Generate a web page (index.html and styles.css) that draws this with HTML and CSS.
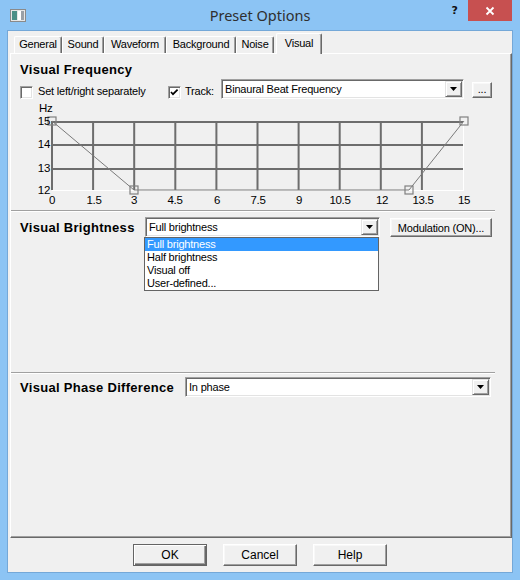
FILE: index.html
```html
<!DOCTYPE html>
<html>
<head>
<meta charset="utf-8">
<title>Preset Options</title>
<link rel="stylesheet" href="styles.css">
</head>
<body>
<div class="window">
  <div class="titlebar">
    <div class="tb-left">
      <svg class="app-icon" width="16" height="13" viewBox="0 0 16 13">
        <rect x="0.5" y="0.5" width="15" height="12" fill="#e6e6e6" stroke="#8a8a8a"/>
        <rect x="2" y="2" width="5" height="9" fill="#4c8f87"/>
        <rect x="8" y="2" width="6" height="9" fill="#ffffff"/>
        <rect x="11" y="2" width="3" height="9" fill="#9aa0a6"/>
      </svg>
    </div>
    <div class="title">Preset Options</div>
    <div class="tb-right">
      <div class="help">?</div>
      <div class="close">
        <svg width="10" height="10" viewBox="0 0 10 10"><path d="M1.5 1.5 L8.5 8.5 M8.5 1.5 L1.5 8.5" stroke="#fff" stroke-width="1.8"/></svg>
      </div>
    </div>
  </div>

  <div class="client">
    <div class="tabs">
      <div class="tab t-general">General</div>
      <div class="tab t-sound">Sound</div>
      <div class="tab t-wave">Waveform</div>
      <div class="tab t-bg">Background</div>
      <div class="tab t-noise">Noise</div>
      <div class="tab active t-visual">Visual</div>
    </div>

    <div class="panel">
      <h2 class="heading">Visual Frequency</h2>
      <div class="row row-track">
        <div class="chk"></div>
        <div class="chk-label wide">Set left/right separately</div>
        <div class="chk checked">
          <svg width="11" height="11" viewBox="0 0 11 11"><path d="M2 5 L4 7.2 L8.6 2.6" fill="none" stroke="#000" stroke-width="1.7"/></svg>
        </div>
        <div class="chk-label track">Track:</div>
        <div class="combo combo-track">
          <div class="combo-text">Binaural Beat Frequency</div>
          <div class="arrow-btn"><svg width="7" height="4" viewBox="0 0 7 4"><path d="M0 0 H7 L3.5 4 Z" fill="#000"/></svg></div>
        </div>
        <div class="btn small">...</div>
      </div>

      <svg class="chart" width="480" height="108" viewBox="20 99 480 108">
        <g stroke="#6d6d6d" stroke-width="2">
          <line x1="52" y1="122" x2="463" y2="122"/>
          <line x1="52" y1="145" x2="463" y2="145"/>
          <line x1="52" y1="169" x2="463" y2="169"/>
          <line x1="52" y1="121" x2="52" y2="190"/>
          <line x1="93.1" y1="121" x2="93.1" y2="190"/>
          <line x1="134.2" y1="121" x2="134.2" y2="190"/>
          <line x1="175.3" y1="121" x2="175.3" y2="190"/>
          <line x1="216.4" y1="121" x2="216.4" y2="190"/>
          <line x1="257.5" y1="121" x2="257.5" y2="190"/>
          <line x1="298.6" y1="121" x2="298.6" y2="190"/>
          <line x1="339.7" y1="121" x2="339.7" y2="190"/>
          <line x1="380.8" y1="121" x2="380.8" y2="190"/>
          <line x1="421.9" y1="121" x2="421.9" y2="190"/>
        </g>
        <g stroke="#ffffff" stroke-width="1">
          <line x1="52" y1="190.5" x2="464" y2="190.5"/>
          <line x1="463.5" y1="121" x2="463.5" y2="191"/>
        </g>
        <polyline points="52,121 134,190 409,190 464,121" fill="none" stroke="#7a7a7a" stroke-width="1"/>
        <g fill="none" stroke="#808080" stroke-width="1.2">
          <rect x="48" y="117" width="8" height="8"/>
          <rect x="130" y="186" width="8" height="8"/>
          <rect x="405" y="186" width="8" height="8"/>
          <rect x="460" y="117" width="8" height="8"/>
        </g>
        <g class="axis-text">
          <text x="39" y="112">Hz</text>
          <text x="50" y="125" text-anchor="end">15</text>
          <text x="50" y="148" text-anchor="end">14</text>
          <text x="50" y="172" text-anchor="end">13</text>
          <text x="50" y="194" text-anchor="end">12</text>
        </g>
        <g class="axis-text" text-anchor="middle">
          <text x="52" y="204">0</text>
          <text x="94" y="204">1.5</text>
          <text x="134" y="204">3</text>
          <text x="175" y="204">4.5</text>
          <text x="217" y="204">6</text>
          <text x="258" y="204">7.5</text>
          <text x="299" y="204">9</text>
          <text x="340" y="204">10.5</text>
          <text x="382" y="204">12</text>
          <text x="423" y="204">13.5</text>
          <text x="464" y="204">15</text>
        </g>
      </svg>

      <div class="sep sep-first"></div>

      <div class="row row-bright">
        <h2 class="heading inline w-bright">Visual Brightness</h2>
        <div class="combo combo-bright">
          <div class="combo-text">Full brightness</div>
          <div class="arrow-btn"><svg width="7" height="4" viewBox="0 0 7 4"><path d="M0 0 H7 L3.5 4 Z" fill="#000"/></svg></div>
          <div class="dropdown">
            <div class="opt selected">Full brightness</div>
            <div class="opt">Half brightness</div>
            <div class="opt">Visual off</div>
            <div class="opt">User-defined...</div>
          </div>
        </div>
        <div class="btn modulation">Modulation (ON)...</div>
      </div>

      <div class="sep sep-second"></div>

      <div class="row row-phase">
        <h2 class="heading inline w-phase">Visual Phase Difference</h2>
        <div class="combo combo-phase">
          <div class="combo-text">In phase</div>
          <div class="arrow-btn"><svg width="7" height="4" viewBox="0 0 7 4"><path d="M0 0 H7 L3.5 4 Z" fill="#000"/></svg></div>
        </div>
      </div>
    </div>

    <div class="buttons">
      <div class="btn dlg default">OK</div>
      <div class="btn dlg">Cancel</div>
      <div class="btn dlg">Help</div>
    </div>
  </div>
</div>
</body>
</html>
```

FILE: styles.css
```css
* { box-sizing: border-box; }

body {
  margin: 0;
  background: #8cc4f4;
  font-family: "Liberation Sans", Arial, sans-serif;
  font-size: 11px;
  letter-spacing: -0.2px;
  color: #000;
}

.window {
  width: 520px;
  height: 580px;
  background: #8cc4f4;
  display: flex;
  flex-direction: column;
}

/* Title bar */
.titlebar {
  height: 30px;
  display: grid;
  grid-template-columns: 1fr auto 1fr;
  align-items: start;
}
.tb-left { padding: 9px 0 0 10px; }
.app-icon { display: block; }
.title {
  font-family: "Noto Sans", "Open Sans", sans-serif;
  font-size: 14.5px;
  letter-spacing: 0;
  color: #2f2f2f;
  line-height: 30px;
}
.tb-right {
  display: flex;
  justify-content: flex-end;
  align-items: flex-start;
}
.help {
  font-family: "DejaVu Sans", sans-serif;
  font-weight: bold;
  font-size: 11px;
  letter-spacing: 0;
  line-height: 14px;
  margin: 4px 10px 0 0;
  color: #111;
}
.close {
  width: 44px;
  height: 21px;
  margin-right: 8px;
  background: #c75050;
  display: flex;
  align-items: center;
  justify-content: center;
}
.close svg { display: block; }

/* Client area */
.client {
  margin: 0 7px;
  height: 543px;
  border: 1px solid #74a8d8;
  background: #f0f0f0;
  display: flex;
  flex-direction: column;
}

/* Tabs */
.tabs {
  height: 22px;
  display: flex;
  align-items: flex-end;
  padding-left: 6px;
}
.tab {
  height: 17px;
  border-top: 1px solid #fff;
  border-left: 1px solid #fff;
  border-right: 1px solid #696969;
  border-radius: 2px 2px 0 0;
  box-shadow: inset -1px 0 #a0a0a0;
  text-align: center;
  line-height: 15px;
  background: #f0f0f0;
}
.t-general { width: 48px; }
.t-sound { width: 42px; }
.t-wave { width: 62px; }
.t-bg { width: 70px; }
.t-noise { width: 38px; }
.t-visual { width: 46px; margin-left: 2px; }
.tab.active {
  height: 21px;
  margin-bottom: -1px;
  line-height: 18px;
  position: relative;
  z-index: 2;
}

/* Tab panel */
.panel {
  margin-left: 2px;
  width: 502px;
  height: 485px;
  border-top: 1px solid #fff;
  border-left: 1px solid #fff;
  border-right: 1px solid #696969;
  border-bottom: 1px solid #696969;
  box-shadow: inset -1px -1px #a0a0a0;
  padding: 8px 0 0 9px;
}

.heading {
  margin: 0;
  font-size: 13px;
  font-weight: bold;
  line-height: 16px;
  letter-spacing: 0.3px;
}
.heading.inline { line-height: 20px; padding-top: 1px; flex: none; }
.w-bright { width: 125px; }
.w-phase { width: 165px; }

.row {
  display: flex;
  align-items: flex-start;
  height: 20px;
}
.row-track { margin-top: 1px; }

/* Checkbox */
.chk {
  width: 13px;
  height: 13px;
  margin-top: 7px;
  flex: none;
  background: #fff;
  border: 1px solid;
  border-color: #a0a0a0 #fff #fff #a0a0a0;
  box-shadow: inset 1px 1px #696969, inset -1px -1px #e3e3e3;
}
.chk svg { display: block; }
.chk-label {
  margin-top: 6px;
  margin-left: 5px;
  line-height: 13px;
  flex: none;
}
.chk-label.wide { width: 130px; }
.chk-label.track { margin-left: 4px; width: 36px; }

/* Combobox */
.combo {
  height: 20px;
  display: flex;
  padding: 1px;
  background: #fff;
  border: 1px solid;
  border-color: #a0a0a0 #fff #fff #a0a0a0;
  box-shadow: inset 1px 1px #696969, inset -1px -1px #e3e3e3;
  position: relative;
  flex: none;
}
.combo-text {
  flex: 1;
  padding-left: 2px;
  line-height: 16px;
  white-space: nowrap;
  overflow: hidden;
}
.arrow-btn {
  width: 17px;
  height: 16px;
  flex: none;
  background: #f0f0f0;
  border: 1px solid;
  border-color: #e3e3e3 #696969 #696969 #e3e3e3;
  box-shadow: inset 1px 1px #fff, inset -1px -1px #a0a0a0;
  display: flex;
  align-items: center;
  justify-content: center;
}
.arrow-btn svg { display: block; }
.combo-track { width: 243px; }
.combo-bright { width: 235px; }
.combo-phase { width: 306px; }

/* Buttons */
.btn {
  background: #f0f0f0;
  border: 1px solid;
  border-color: #fff #696969 #696969 #fff;
  box-shadow: inset -1px -1px #a0a0a0, inset 1px 1px #f8f8f8;
  display: flex;
  align-items: center;
  justify-content: center;
  flex: none;
}
.btn.small {
  width: 20px;
  height: 16px;
  margin: 3px 0 0 8px;
  line-height: 12px;
  align-items: flex-end;
  padding-bottom: 2px;
}
.btn.modulation {
  width: 102px;
  height: 19px;
  margin: 1px 0 0 10px;
}

/* Chart */
.chart { display: block; }
.axis-text text {
  font-family: "Liberation Sans", Arial, sans-serif;
  font-size: 11.5px;
  letter-spacing: -0.3px;
  fill: #000;
}

/* Separators */
.sep {
  margin-left: -9px;
  width: 484px;
  height: 2px;
  border-top: 1px solid #a0a0a0;
  border-bottom: 1px solid #fff;
}
.sep-first { margin-top: 3px; }
.row-bright { margin-top: 5px; }
.sep-second { margin-top: 135px; }
.row-phase { margin-top: 3px; }

/* Dropdown list */
.dropdown {
  position: absolute;
  left: -2px;
  top: 19px;
  width: 235px;
  height: 54px;
  background: #fff;
  border: 1px solid #646464;
  z-index: 5;
}
.opt {
  height: 13px;
  line-height: 13px;
  padding-left: 2px;
  white-space: nowrap;
}
.opt.selected {
  background: #3399ff;
  color: #fff;
}

/* Dialog buttons */
.buttons {
  margin-top: 6px;
  display: flex;
  justify-content: center;
  gap: 16px;
}
.btn.dlg {
  width: 74px;
  height: 22px;
  font-size: 12px;
  letter-spacing: 0;
}
.btn.default {
  border: 1px solid #646464;
  box-shadow: inset 1px 1px #fff, inset -1px -1px #696969, inset -2px -2px #a0a0a0;
}
```
